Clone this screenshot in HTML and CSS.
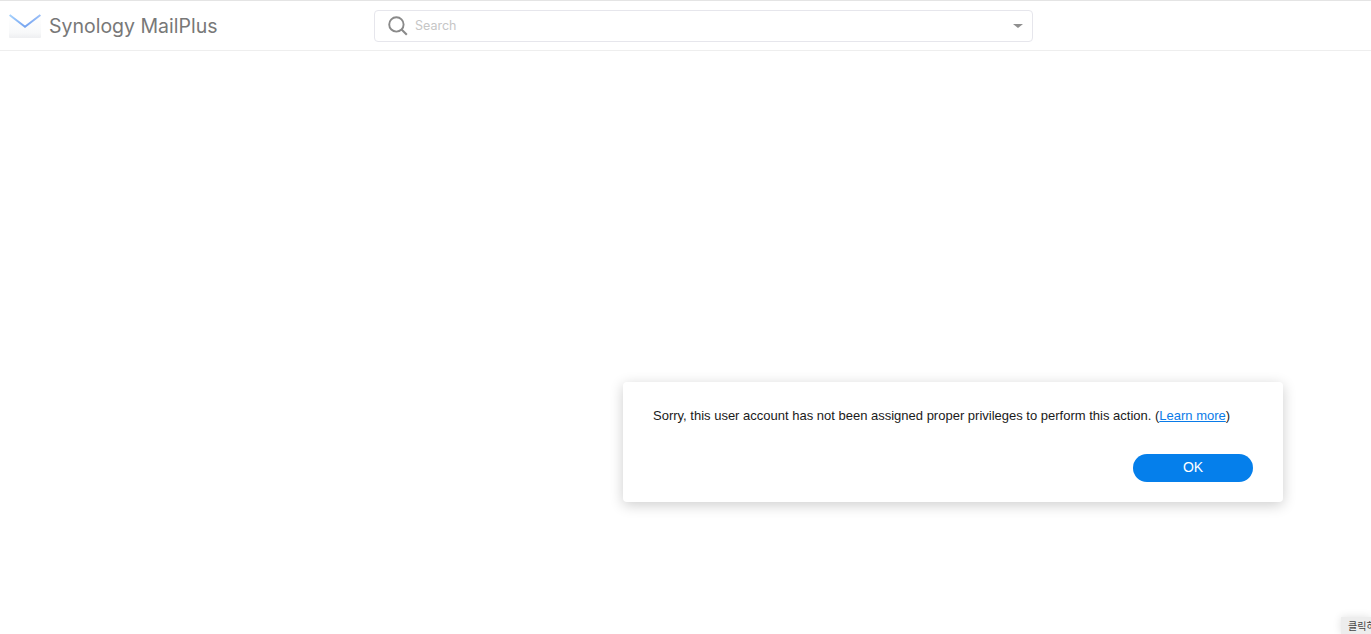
FILE: index.html
```html
<!DOCTYPE html>
<html lang="en">
<head>
<meta charset="utf-8">
<title>Synology MailPlus</title>
<link rel="stylesheet" href="styles.css">
</head>
<body>
<header class="topbar">
  <div class="brand">
    <svg class="logo" width="32" height="24" viewBox="0 0 32 24" aria-hidden="true">
      <defs>
        <linearGradient id="body" x1="0" y1="0" x2="0" y2="1">
          <stop offset="0" stop-color="#ffffff"/>
          <stop offset="0.75" stop-color="#f8f9fa"/>
          <stop offset="1" stop-color="#eeeff1"/>
        </linearGradient>
        <linearGradient id="flap" x1="0" y1="0" x2="1" y2="0">
          <stop offset="0" stop-color="#a6d2fd"/>
          <stop offset="0.5" stop-color="#74a3f0"/>
          <stop offset="1" stop-color="#9cc0f8"/>
        </linearGradient>
      </defs>
      <path d="M0 1 16 13 32 1V23a1 1 0 0 1-1 1H1a1 1 0 0 1-1-1Z" fill="url(#body)"/>
      <path d="M0.6 1 16 12.8 31.4 1" fill="none" stroke="url(#flap)" stroke-width="2"/>
    </svg>
    <span class="brand-name">Synology MailPlus</span>
  </div>
  <div class="search">
    <svg class="search-icon" width="20" height="20" viewBox="0 0 20 20" aria-hidden="true">
      <circle cx="8.4" cy="8.4" r="7.2" fill="none" stroke="#8a8a8a" stroke-width="1.9"/>
      <path d="M13.6 13.6 18.8 18.8" fill="none" stroke="#8a8a8a" stroke-width="2.1"/>
    </svg>
    <span class="search-text">Search</span>
    <span class="caret"></span>
  </div>
</header>

<div class="dialog">
  <p class="message">Sorry, this user account has not been assigned proper privileges to perform this action. (<a class="link" href="#">Learn more</a>)</p>
  <div class="actions"><button class="ok" type="button">OK</button></div>
</div>

<div class="hint">클릭하여</div>
</body>
</html>
```
FILE: styles.css
```css
html, body {
  margin: 0;
  height: 100%;
  background: #fff;
  overflow: hidden;
}

body {
  position: relative;
  font-family: "Liberation Sans", Arial, sans-serif;
}

.topbar {
  box-sizing: border-box;
  height: 51px;
  display: flex;
  align-items: center;
  border-top: 1px solid #e4e4e4;
  border-bottom: 1px solid #eeeeee;
  padding-left: 9px;
}

.brand {
  width: 365px;
  display: flex;
  align-items: center;
  gap: 8px;
}

.logo {
  display: block;
  flex: none;
}

.brand-name {
  font-family: Inter, sans-serif;
  font-size: 19.5px;
  color: #787878;
  white-space: nowrap;
}

.search {
  box-sizing: border-box;
  width: 659px;
  height: 32px;
  display: flex;
  align-items: center;
  border: 1px solid #e6e6ec;
  border-radius: 4px;
  padding: 0 9px 0 13px;
}

.search-icon {
  flex: none;
  margin-right: 7px;
}

.search-text {
  flex: 1;
  font-family: Inter, sans-serif;
  font-size: 12.5px;
  color: #c6c6c6;
}

.caret {
  width: 0;
  height: 0;
  border-left: 5px solid transparent;
  border-right: 5px solid transparent;
  border-top: 4px solid #8f8f8f;
}

.dialog {
  position: absolute;
  left: 623px;
  top: 382px;
  box-sizing: border-box;
  width: 660px;
  height: 120px;
  padding: 26px 30px 20px;
  display: flex;
  flex-direction: column;
  justify-content: space-between;
  background: #fff;
  border-radius: 4px;
  box-shadow: 0 3px 14px rgba(0, 0, 0, 0.2);
}

.message {
  margin: 0;
  font-size: 13px;
  line-height: 16px;
  color: #1a1a1a;
  white-space: nowrap;
}

.link {
  color: #0a7be8;
  text-decoration: underline;
}

.actions {
  display: flex;
  justify-content: flex-end;
}

.ok {
  width: 120px;
  height: 28px;
  border: 0;
  border-radius: 14px;
  background: #057feb;
  color: #fff;
  font-family: "Liberation Sans", Arial, sans-serif;
  font-size: 14px;
  padding: 0 0 2px;
}

.hint {
  position: absolute;
  left: 1341px;
  top: 617px;
  width: 30px;
  height: 17px;
  overflow: hidden;
  box-sizing: border-box;
  padding: 2px 0 0 7px;
  background: #ededed;
  font-family: "Noto Sans CJK KR", sans-serif;
  font-size: 10px;
  line-height: 14px;
  color: #444;
  white-space: nowrap;
  box-shadow: 0 0 8px rgba(0, 0, 0, 0.12);
}
```
